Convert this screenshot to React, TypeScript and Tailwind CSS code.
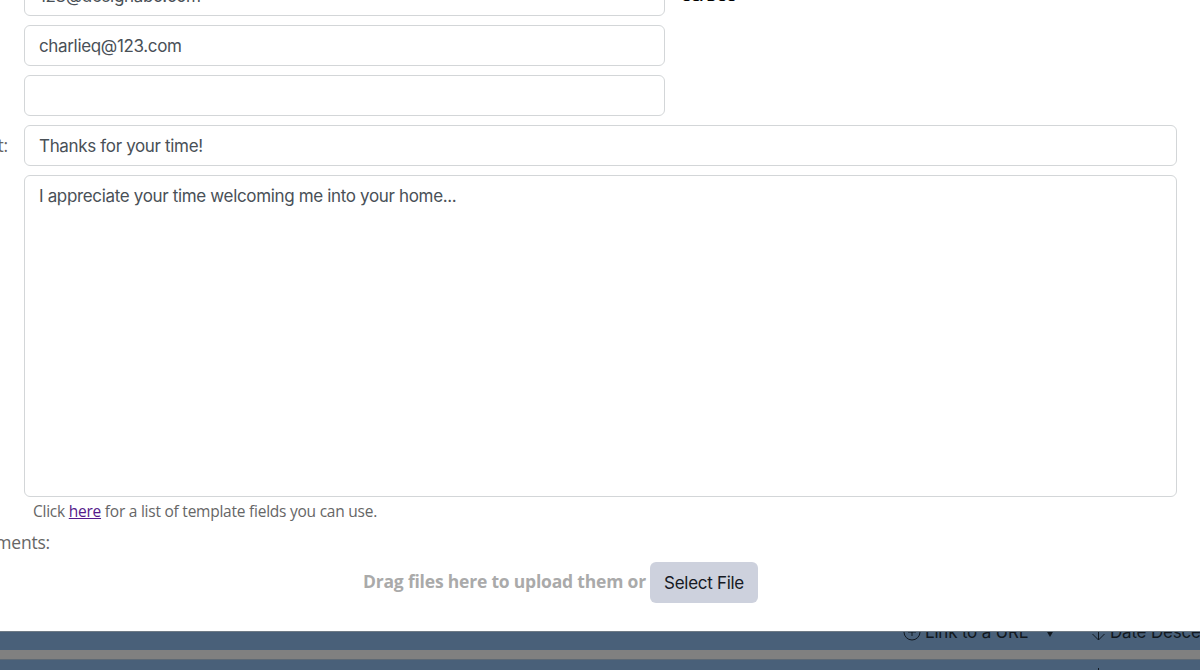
import { ReactNode } from 'react';
import clsx from 'clsx';

const RECIPIENTS = ['123@designabc.com', 'charlieq@123.com', ''];

function Field({ value, className }: { value: string; className?: string }) {
  return (
    <div className={clsx('h-[41px] rounded-md border border-[#d3d6d8] bg-white px-[14px] pt-[7px] font-[Inter,sans-serif] text-[17px] leading-[26px] tracking-[-0.34px] text-[#495057]', className)}>
      {value}
    </div>
  );
}

function Row({ label, children }: { label?: string; children: ReactNode }) {
  return (
    <div className="flex">
      <div className="flex h-[41px] w-[24px] shrink-0 items-center justify-end overflow-hidden pr-[16px] pb-px text-[17.5px] tracking-[-0.2px]">{label}</div>
      <div className="flex min-w-0 flex-1 items-center">{children}</div>
    </div>
  );
}

function Toolbar() {
  return (
    <div className="flex h-[39px] flex-col bg-[#808080]">
      <div className="h-[19px] shrink-0 overflow-hidden border-t border-[#6f7b86] bg-[#496079] pl-[903px] text-[#111820]">
        <div className="-mt-[11px] flex h-[22px] w-[400px] items-center font-[Inter,sans-serif] text-[17px] leading-[22px] tracking-[-0.2px]">
          <svg className="mr-[4px] h-[18px] w-[18px] shrink-0" viewBox="0 0 18 18" fill="none" stroke="currentColor">
            <circle cx="9" cy="9" r="8" />
            <path d="M9 5v8M5 9h8" />
          </svg>
          <span className="w-[121px] shrink-0">Link to a URL</span>
          <svg className="mt-[3px] h-[6px] w-[8px] shrink-0" viewBox="0 0 8 6" fill="currentColor"><path d="M0.5 0h7L4 6z" /></svg>
          <svg className="ml-[38px] mr-[4px] h-[18px] w-[14px] shrink-0" viewBox="0 0 14 18" fill="none" stroke="currentColor">
            <path d="M6.5 0v17M0.5 11l6 6 6-6" />
          </svg>
          <span className="whitespace-nowrap">Date Descending</span>
        </div>
      </div>
      <div className="mt-[9px] h-[11px] shrink-0 border-t border-[#5e6974] bg-[#496079] pl-[1098px]">
        <div className="mt-[8px] h-[2px] w-px bg-[#111820]" />
      </div>
    </div>
  );
}

export default function App() {
  return (
    <div className="h-[670px] w-[1200px] overflow-hidden bg-[#808080] font-['Open_Sans',sans-serif] text-[#666]">
      <div className="flex h-[631px] flex-col overflow-hidden bg-white pr-[23px]">
        <div className="-mt-[25px] flex flex-col gap-[9px]">
          {RECIPIENTS.map((value, i) => (
            <Row key={i}>
              <Field value={value} className="w-[641px]" />
              {i === 0 && <span className="ml-[16px] text-[15px] font-bold text-black">CC/BCC</span>}
            </Row>
          ))}
          <Row label="Subject:">
            <Field value="Thanks for your time!" className="flex-1" />
          </Row>
          <Row>
            <Field value="I appreciate your time welcoming me into your home..." className="h-[322px] flex-1" />
          </Row>
        </div>
        <p className="mt-[3px] pl-[33px] text-[15.5px] leading-[22px] tracking-[-0.24px]">
          Click <a className="text-[#551a8b] underline">here</a> for a list of template fields you can use.
        </p>
        <div className="mt-[8px] flex w-[50px] justify-end overflow-hidden text-[17.5px] leading-[24px] tracking-[-0.2px]">Attachments:</div>
        <div className="mt-[8px] flex items-center pl-[363px]">
          <span className="w-[287px] shrink-0 whitespace-nowrap pb-[3px] text-[17.5px] font-bold tracking-[-0.2px] text-[#aaa]">Drag files here to upload them or</span>
          <button className="h-[41px] w-[108px] rounded-md bg-[#cdd1dd] pt-[2px] font-[Inter,sans-serif] text-[17px] tracking-[-0.3px] text-[#161a24]">Select File</button>
        </div>
      </div>
      <Toolbar />
    </div>
  );
}
